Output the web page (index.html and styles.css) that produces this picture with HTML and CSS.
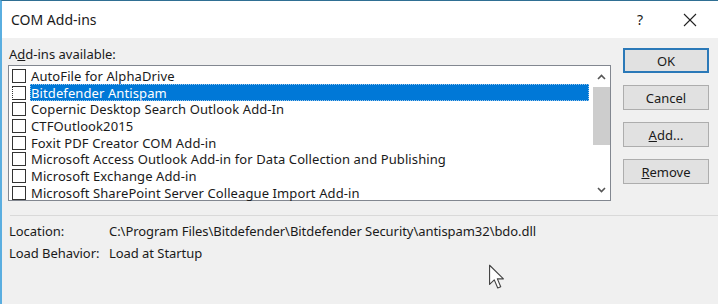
FILE: index.html
```html
<!DOCTYPE html>
<html lang="en">
<head>
    <meta charset="UTF-8">
    <title>COM Add-ins</title>
    <link rel="stylesheet" href="styles.css">
</head>
<body>
    <div class="dialog">
        <div class="titlebar">
            <span class="title">COM Add-ins</span>
            <span class="help">?</span>
            <svg class="close" width="14" height="14" viewBox="0 0 14 14" fill="none" stroke="#222" stroke-width="1.1">
                <line x1="1" y1="1" x2="13" y2="13"/>
                <line x1="13" y1="1" x2="1" y2="13"/>
            </svg>
        </div>
        <div class="content">
            <div class="main">
                <div class="left">
                    <div class="label">A<u>d</u>d-ins available:</div>
                    <div class="listbox">
                        <ul class="items">
                            <li><span class="check"></span><span class="name">AutoFile for AlphaDrive</span></li>
                            <li class="selected"><span class="check"></span><span class="name">Bitdefender Antispam</span></li>
                            <li><span class="check"></span><span class="name">Copernic Desktop Search Outlook Add-In</span></li>
                            <li><span class="check"></span><span class="name">CTFOutlook2015</span></li>
                            <li><span class="check"></span><span class="name">Foxit PDF Creator COM Add-in</span></li>
                            <li><span class="check"></span><span class="name">Microsoft Access Outlook Add-in for Data Collection and Publishing</span></li>
                            <li><span class="check"></span><span class="name">Microsoft Exchange Add-in</span></li>
                            <li><span class="check"></span><span class="name">Microsoft SharePoint Server Colleague Import Add-in</span></li>
                        </ul>
                        <div class="scrollbar">
                            <div class="arrow">
                                <svg width="9" height="6" viewBox="0 0 9 6" fill="none" stroke="#555" stroke-width="1.6"><path d="M1 5L4.5 1.5L8 5"/></svg>
                            </div>
                            <div class="thumb"></div>
                            <div class="track"></div>
                            <div class="arrow">
                                <svg width="9" height="6" viewBox="0 0 9 6" fill="none" stroke="#555" stroke-width="1.6"><path d="M1 1L4.5 4.5L8 1"/></svg>
                            </div>
                        </div>
                    </div>
                </div>
                <div class="buttons">
                    <button class="default">OK</button>
                    <button>Cancel</button>
                    <button><u>A</u>dd...</button>
                    <button><u>R</u>emove</button>
                </div>
            </div>
            <div class="separator"></div>
            <div class="info">
                <span>Location:</span>
                <span>C:\Program Files\Bitdefender\Bitdefender Security\antispam32\bdo.dll</span>
                <span>Load Behavior:</span>
                <span>Load at Startup</span>
            </div>
            <svg class="cursor" width="18" height="26" viewBox="0 0 14 21">
                <path d="M1 1V16.5L4.8 12.8L7.6 19.4L10 18.4L7.3 12H12.2Z" fill="#fff" stroke="#444" stroke-width="0.9" stroke-linejoin="round"/>
            </svg>
        </div>
    </div>
</body>
</html>
```

FILE: styles.css
```css
:root {
    --bg: #f0f0f0;
    --border: #828790;
    --select: #0078d7;
    --text: #1a1a1a;
}

* {
    margin: 0;
    padding: 0;
    box-sizing: border-box;
}

body {
    width: 718px;
    height: 304px;
    overflow: hidden;
    font-family: "Noto Sans", "Open Sans", sans-serif;
    font-size: 13px;
    color: var(--text);
    background: var(--bg);
}

.dialog {
    height: 304px;
    border-top: 1px solid #2f6f93;
    border-left: 2px solid #5aaee0;
    display: flex;
    flex-direction: column;
}

.titlebar {
    height: 37px;
    background: #fff;
    display: flex;
    align-items: center;
    padding-left: 9px;
}

.title {
    font-size: 14px;
    flex: 1;
}

.help {
    font-size: 14px;
    margin-right: 40px;
}

.close {
    margin-right: 21px;
}

.content {
    flex: 1;
    position: relative;
    padding: 8px 0 0 6px;
}

.main {
    display: flex;
    gap: 12px;
}

.left {
    width: 603px;
}

.label {
    height: 19px;
    line-height: 17px;
    padding-left: 1px;
}

.listbox {
    height: 136px;
    border: 1px solid var(--border);
    background: #fff;
    display: flex;
}

.items {
    flex: 1;
    list-style: none;
    padding: 1.5px 2px 0 3px;
}

.items li {
    height: 16.7px;
    display: flex;
    align-items: center;
    white-space: nowrap;
}

.check {
    width: 14px;
    height: 14px;
    border: 1px solid #333;
    background: #fff;
    margin-right: 4px;
    flex: none;
}

.name {
    padding: 0 1px;
    line-height: 16px;
    letter-spacing: 0.1px;
}

.selected .name {
    flex: 1;
    align-self: stretch;
    display: flex;
    align-items: center;
    background: var(--select);
    color: #fff;
    outline: 1px dotted #9cc6ea;
    outline-offset: -1px;
    margin-right: 2px;
}

.selected .check {
    border-left-style: dotted;
}

.scrollbar {
    width: 17px;
    display: flex;
    flex-direction: column;
}

.arrow {
    height: 21px;
    display: flex;
    align-items: center;
    justify-content: center;
}

.thumb {
    height: 58px;
    background: #cdcdcd;
}

.track {
    flex: 1;
}

.buttons {
    display: flex;
    flex-direction: column;
    gap: 12px;
    padding-top: 2px;
}

button {
    width: 86px;
    height: 25px;
    font-family: inherit;
    font-size: 13px;
    color: var(--text);
    background: #e1e1e1;
    border: 1px solid #adadad;
}

button.default {
    border: 2px solid #2b79b8;
}

.separator {
    height: 1px;
    background: #d9d9d9;
    margin: 14px 0 0 2px;
}

.info {
    display: grid;
    grid-template-columns: 100px auto;
    grid-auto-rows: 22px;
    align-items: center;
    padding: 4px 0 0 1px;
    font-size: 13px;
    letter-spacing: -0.05px;
}

.cursor {
    position: absolute;
    left: 486px;
    top: 226px;
}
```
